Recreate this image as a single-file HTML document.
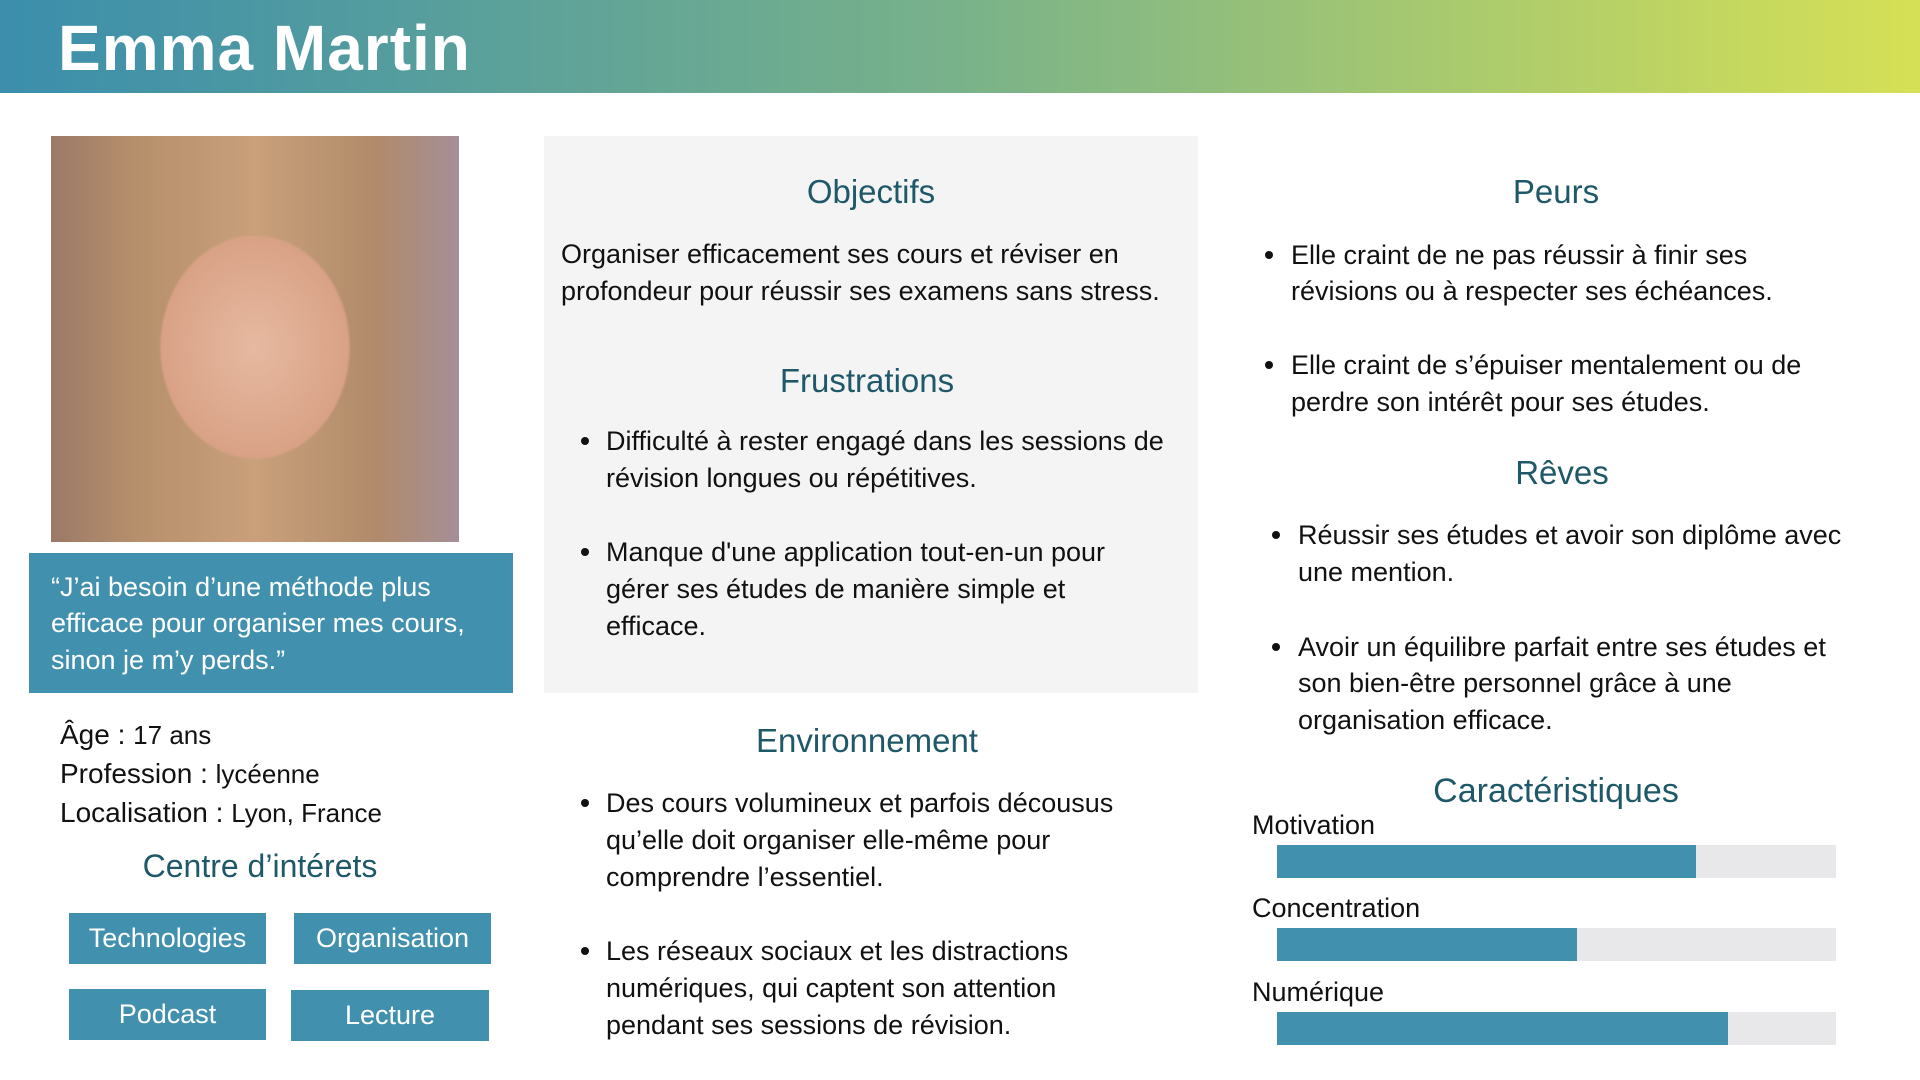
<!DOCTYPE html>
<html><head><meta charset="utf-8"><style>
*{margin:0;padding:0;box-sizing:border-box}
body{width:1920px;height:1080px;position:relative;overflow:hidden;background:#fff;font-family:"Liberation Sans",sans-serif;color:#111}
.a{position:absolute;white-space:nowrap}
.t{font-size:27px;line-height:37px}
.h{font-size:33px;line-height:40px;color:#1f5868;transform:translateX(-50%)}
.d{position:absolute;width:8px;height:8px;border-radius:50%;background:#111}
.tag{position:absolute;background:#4190ae;color:#fff;font-size:27px;display:flex;align-items:center;justify-content:center}
.bar{position:absolute;left:1277px;width:559px;height:33px;background:#e8e8ea}
.bar i{display:block;height:100%;background:#4190ae}
</style></head><body>
<div class="a" style="left:0;top:0;width:1920px;height:93px;background:linear-gradient(90deg,#3b8eac 0%,#79b28a 50%,#d6e055 100%)"></div>
<div class="a" style="left:58px;top:11px;font-size:64px;font-weight:bold;color:#fff;line-height:74px;letter-spacing:1px">Emma Martin</div>

<div class="a" style="left:51px;top:136px;width:408px;height:406px;background:radial-gradient(ellipse 38% 45% at 50% 52%,#e6b9a0 0%,#d9a286 60%,transparent 62%),linear-gradient(90deg,#9a7a68 0%,#b58e6b 20%,#c9a07a 50%,#b08a6a 80%,#a58f98 100%)"></div>

<div class="a" style="left:29px;top:553px;width:484px;height:140px;background:#4190ae"></div>
<div class="a t" style="left:51px;top:569px;color:#fff">“J’ai besoin d’une méthode plus</div>
<div class="a t" style="left:51px;top:605px;color:#fff">efficace pour organiser mes cours,</div>
<div class="a t" style="left:51px;top:642px;color:#fff">sinon je m’y perds.”</div>

<div class="a" style="left:60px;top:716px;font-size:28px;line-height:37px">Âge : <span style="font-size:26px">17 ans</span></div>
<div class="a" style="left:60px;top:755px;font-size:28px;line-height:37px">Profession : <span style="font-size:26px">lycéenne</span></div>
<div class="a" style="left:60px;top:794px;font-size:28px;line-height:37px">Localisation : <span style="font-size:26px">Lyon, France</span></div>
<div class="a h" style="left:260px;top:846px;font-size:32px">Centre d’intérets</div>
<div class="tag" style="left:69px;top:913px;width:197px;height:51px">Technologies</div>
<div class="tag" style="left:294px;top:913px;width:197px;height:51px">Organisation</div>
<div class="tag" style="left:69px;top:989px;width:197px;height:51px">Podcast</div>
<div class="tag" style="left:291px;top:990px;width:198px;height:51px">Lecture</div>

<div class="a" style="left:544px;top:136px;width:654px;height:557px;background:#f4f4f4"></div>
<div class="a h" style="left:871px;top:172px">Objectifs</div>
<div class="a t" style="left:561px;top:236px">Organiser efficacement ses cours et réviser en</div>
<div class="a t" style="left:561px;top:273px">profondeur pour réussir ses examens sans stress.</div>
<div class="a h" style="left:867px;top:361px">Frustrations</div>
<div class="d" style="left:581px;top:437px"></div>
<div class="a t" style="left:606px;top:423px">Difficulté à rester engagé dans les sessions de</div>
<div class="a t" style="left:606px;top:460px">révision longues ou répétitives.</div>
<div class="d" style="left:581px;top:548px"></div>
<div class="a t" style="left:606px;top:534px">Manque d'une application tout-en-un pour</div>
<div class="a t" style="left:606px;top:571px">gérer ses études de manière simple et</div>
<div class="a t" style="left:606px;top:608px">efficace.</div>

<div class="a h" style="left:867px;top:721px">Environnement</div>
<div class="d" style="left:581px;top:799px"></div>
<div class="a t" style="left:606px;top:785px">Des cours volumineux et parfois décousus</div>
<div class="a t" style="left:606px;top:822px">qu’elle doit organiser elle-même pour</div>
<div class="a t" style="left:606px;top:859px">comprendre l’essentiel.</div>
<div class="d" style="left:581px;top:947px"></div>
<div class="a t" style="left:606px;top:933px">Les réseaux sociaux et les distractions</div>
<div class="a t" style="left:606px;top:970px">numériques, qui captent son attention</div>
<div class="a t" style="left:606px;top:1007px">pendant ses sessions de révision.</div>

<div class="a h" style="left:1556px;top:172px">Peurs</div>
<div class="d" style="left:1265px;top:251px"></div>
<div class="a t" style="left:1291px;top:237px">Elle craint de ne pas réussir à finir ses</div>
<div class="a t" style="left:1291px;top:273px">révisions ou à respecter ses échéances.</div>
<div class="d" style="left:1265px;top:361px"></div>
<div class="a t" style="left:1291px;top:347px">Elle craint de s’épuiser mentalement ou de</div>
<div class="a t" style="left:1291px;top:384px">perdre son intérêt pour ses études.</div>
<div class="a h" style="left:1562px;top:453px">Rêves</div>
<div class="d" style="left:1272px;top:531px"></div>
<div class="a t" style="left:1298px;top:517px">Réussir ses études et avoir son diplôme avec</div>
<div class="a t" style="left:1298px;top:554px">une mention.</div>
<div class="d" style="left:1272px;top:643px"></div>
<div class="a t" style="left:1298px;top:629px">Avoir un équilibre parfait entre ses études et</div>
<div class="a t" style="left:1298px;top:665px">son bien-être personnel grâce à une</div>
<div class="a t" style="left:1298px;top:702px">organisation efficace.</div>

<div class="a h" style="left:1556px;top:771px;font-size:34px">Caractéristiques</div>
<div class="a t" style="left:1252px;top:807px">Motivation</div>
<div class="bar" style="top:845px"><i style="width:419px"></i></div>
<div class="a t" style="left:1252px;top:890px">Concentration</div>
<div class="bar" style="top:928px"><i style="width:300px"></i></div>
<div class="a t" style="left:1252px;top:974px">Numérique</div>
<div class="bar" style="top:1012px"><i style="width:451px"></i></div>
</body></html>
